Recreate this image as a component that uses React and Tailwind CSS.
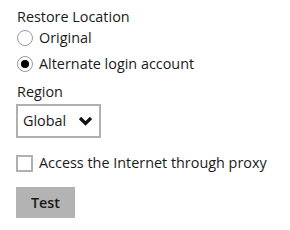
import React, { useState } from 'react'

function Radio({ checked }) {
    return (
        <span className="flex h-4 w-4 shrink-0 items-center justify-center rounded-full border border-[#9a9a9a] bg-white">
            {checked && <span className="h-2 w-2 rounded-full bg-black" />}
        </span>
    )
}

export default function App() {
    const [location, setLocation] = useState('alternate')
    const [proxy, setProxy] = useState(false)

    return (
        <div className="h-[230px] w-[290px] bg-white pl-4 pt-[7px] text-[14.4px] leading-[20px] text-[#1a1a1a]" style={{ fontFamily: '"Open Sans", "Liberation Sans", sans-serif' }}>
            <div className="pl-px">Restore Location</div>
            <div className="mt-px flex items-center gap-[6px] pl-px" onClick={() => setLocation('original')}>
                <Radio checked={location === 'original'} />
                <span>Original</span>
            </div>
            <div className="mt-[6px] flex items-center gap-[6px] pl-px" onClick={() => setLocation('alternate')}>
                <Radio checked={location === 'alternate'} />
                <span>Alternate login account</span>
            </div>
            <div className="mt-2 pl-px">Region</div>
            <div className="mt-[2px] flex h-[34px] w-[85px] items-center justify-between border-2 border-[#b0b0b0] pl-[5px] pr-[6px]">
                <span>Global</span>
                <svg width="15" height="10" viewBox="0 0 15 10">
                    <path d="M2 2 L7.5 7.5 L13 2" fill="none" stroke="#111" strokeWidth="3.2" />
                </svg>
            </div>
            <div className="mt-[15px] flex items-center gap-[6px]" onClick={() => setProxy(!proxy)}>
                <span className="h-[17px] w-[17px] shrink-0 border-2 border-[#b0b0b0] bg-white" />
                <span>Access the Internet through proxy</span>
            </div>
            <button className="mt-[14px] h-[31px] w-[59px] bg-[#b3b3b3] font-semibold text-[#1a1a1a]">Test</button>
        </div>
    )
}
